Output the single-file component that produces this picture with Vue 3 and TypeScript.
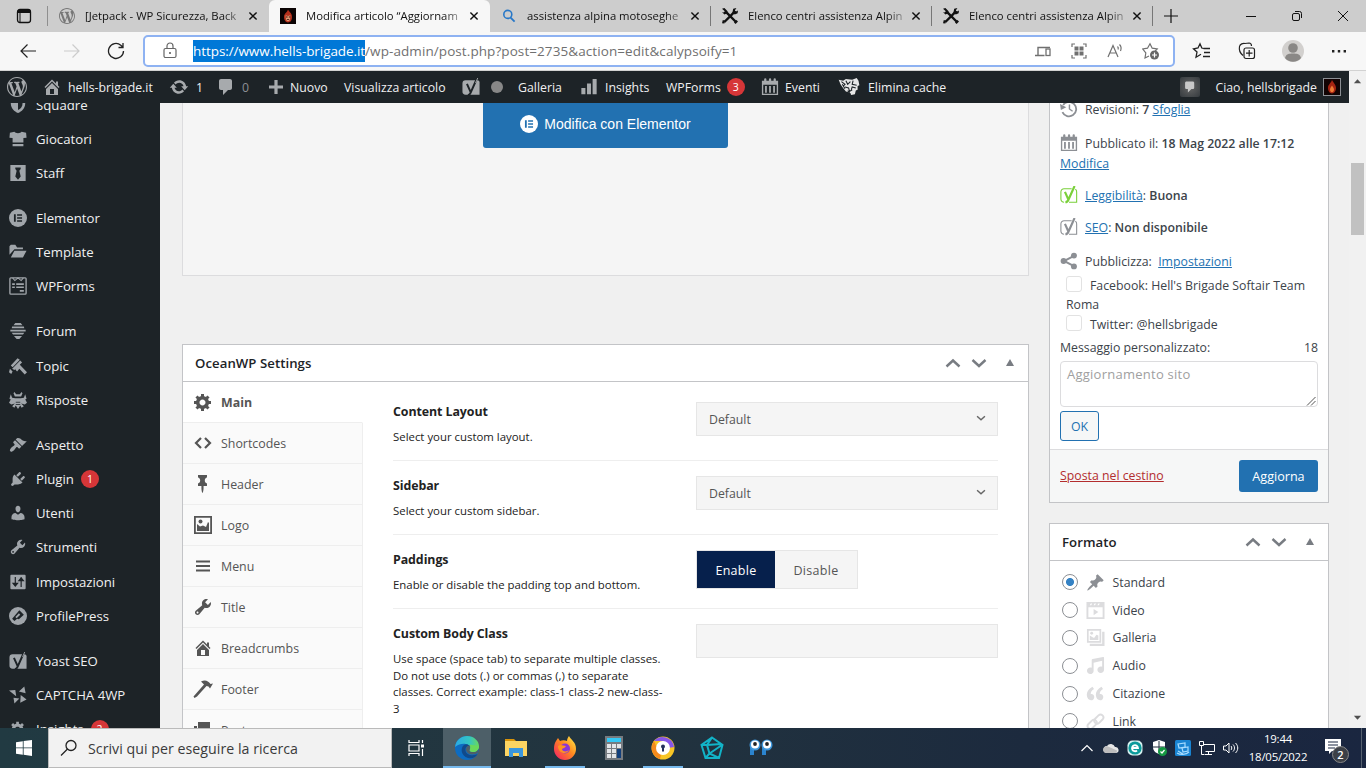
<script setup lang="ts">
interface MenuItem {
  label: string
  icon: string
  badge?: string
  gap?: boolean
}

interface BrowserTab {
  title: string
  icon: string
  active?: boolean
  divider?: boolean
}

const icons: Record<string, string> = {
  wordpress:
    '<path d="M20 10c0-5.51-4.49-10-10-10C4.48 0 0 4.49 0 10c0 5.52 4.48 10 10 10 5.51 0 10-4.48 10-10zM7.78 15.37L4.37 6.22c.55-.02 1.17-.08 1.17-.08.5-.06.44-1.13-.06-1.11 0 0-1.45.11-2.37.11-.18 0-.37 0-.58-.01C4.12 2.69 6.87 1.11 10 1.11c2.33 0 4.45.87 6.05 2.34-.68-.11-1.65.39-1.65 1.58 0 .74.45 1.36.9 2.1.35.61.55 1.36.55 2.46 0 1.49-1.4 5-1.4 5l-3.03-8.37c.54-.02.82-.17.82-.17.5-.05.44-1.25-.06-1.22 0 0-1.44.12-2.38.12-.87 0-2.33-.12-2.33-.12-.5-.03-.56 1.2-.06 1.22l.92.08 1.26 3.41zM17.41 10c.24-.64.74-1.87.43-4.25.7 1.29 1.05 2.71 1.05 4.25 0 3.29-1.73 6.24-4.4 7.78.97-2.59 1.94-5.2 2.92-7.78zM6.1 18.09C3.12 16.65 1.11 13.53 1.11 10c0-1.3.23-2.48.72-3.59C3.25 10.3 4.67 14.2 6.1 18.09zm4.03-6.63l2.58 6.98c-.86.29-1.76.45-2.71.45-.79 0-1.57-.11-2.29-.33.81-2.38 1.62-4.74 2.42-7.1z"/>',
  home: '<path fill-rule="evenodd" d="M16 8.5l1.53 1.53-1.06 1.06L10 4.6l-6.47 6.49-1.06-1.06L10 2.5l4 4v-2h2v4zm-6-2.46l6 5.99V18H4v-5.97zM12 17v-5H8v5h4z"/>',
  update:
    '<path d="M10.2 3.28c3.53 0 6.43 2.61 6.92 6h2.08l-3.5 4-3.5-4h2.32c-.45-1.97-2.21-3.45-4.32-3.45-1.45 0-2.73.71-3.54 1.78L4.95 5.66C6.23 4.2 8.11 3.28 10.2 3.28zm-.4 13.44c-3.52 0-6.43-2.61-6.92-6H.8l3.5-4c1.17 1.33 2.33 2.67 3.5 4H5.48c.45 1.97 2.21 3.45 4.32 3.45 1.45 0 2.73-.71 3.54-1.78l1.71 1.95c-1.28 1.46-3.15 2.38-5.25 2.38z"/>',
  comment: '<path d="M5 2h9c1.1 0 2 .9 2 2v7c0 1.1-.9 2-2 2h-2l-5 5v-5H5c-1.1 0-2-.9-2-2V4c0-1.1.9-2 2-2z"/>',
  plus: '<path d="M8.4 3h3.2v5.4H17v3.2h-5.4V17H8.4v-5.4H3V8.400h5.400z"/>',
  chart: '<path d="M18.500 18V1h-4.500v17zM12.200 18V6H7.800v12zM6 18v-7H1.500v7z"/>',
  calendar:
    '<path fill-rule="evenodd" d="M1 3h2.500V1.500a1.200 1.200 0 0 1 2.500 0V3h2.800V1.500a1.200 1.200 0 0 1 2.500 0V3H14V1.500a1.200 1.200 0 0 1 2.500 0V3H19v16H1zM2.500 7.500v10h15v-10zM4.500 9h2v7.500h-2zM9 9h2v7.500H9zM13.500 9h2v7.500h-2z"/>',
  yoast:
    '<path d="M4 2.500h13a2.500 2.500 0 0 1 2.500 3v13H4a3.500 3.500 0 0 1-3.500-3.500V6A3.500 3.500 0 0 1 4 2.500z"/><path d="M5.500 6.500l4 9M16.800 0L9.500 16.500C8.800 18.200 8 19 6.500 19" fill="none" stroke="#1d2327" stroke-width="2.200"/><path d="M17.500 0l-2.500 5.500" stroke="currentColor" stroke-width="1"/>',
  yoastline:
    '<path d="M13 3H4.500A3.500 3.500 0 0 0 1 6.500v8A3.500 3.500 0 0 0 4.500 18M10 18h8.500V6.500a3 3 0 0 0-1.500-2.800" fill="none" stroke="currentColor" stroke-width="1.200"/><path d="M5.500 6.500l3.800 8.500M16.200 0L9.500 15c-.8 2-1.500 3-3.500 3" fill="none" stroke="currentColor" stroke-width="2.400"/>',
  tiger:
    '<path d="M0 2l5 1 3-2 7 1 5-2 2 3 1 5-2 1v4l-2 1-1 4-4 1-2-3-4-1-4-5-2-3z"/><path d="M3 4l4 3-2 2M8 3l2 4 3-3M16 3l-1 4 5 1M7 10l4 1 1 4 3-2M4 7l3 5M19 11l-4-1-1 3M10 14l3 4" fill="none" stroke="#1d2327" stroke-width="1.200"/>',
  shield: '<path d="M2 4l8-3 8 3v4c0 6-4 9-8 11-4-2-8-5-8-11z"/><path d="M10 4l5 1.500v3c0 3-2 5.500-5 7z" fill="#1d2327"/>',
  shirt: '<path d="M6 2c1 2 7 2 8 0l5 1 .5 5.500L16 9v5H4V9L.5 8.500 1 3zM4 15.500h12V18H4z"/>',
  tie: '<path fill-rule="evenodd" d="M1.500 1h17v18h-17zM7 4h6v1.500l-1.500 2L13 14l-3 3.500L7 14l1.500-6.500L7 5.500z"/>',
  elementor:
    '<circle cx="10" cy="10" r="10"/><path d="M5.500 5.800h2v8.400h-2zM9 5.800h5.500v1.800H9zM9 9.100h5.500v1.800H9zM9 12.400h5.500v1.800H9z" fill="var(--hole,#1d2327)"/>',
  folder: '<path d="M.5 13V3.500L2 2h5l2 3h6.500v2H6zM2 16L6 8.500h13.500L15.500 16z"/>',
  wpforms:
    '<rect x="1" y="1" width="18" height="18" rx="1" fill="none" stroke="currentColor" stroke-width="1.500"/><path d="M4 1l2.500 3L10 1l3.500 3L16 1" fill="none" stroke="currentColor" stroke-width="1.200"/><path d="M3.500 7h3v1.800h-3zM8 7h8.500v1.800H8zM3.500 10.500h3v1.800h-3zM8 10.500h8.500v1.800H8zM12 14.500h4.500v1.800H12z"/>',
  hive: '<path d="M7 1h6l2 2.500H5zM3.500 5h13l.5 2H3zM1.500 8.500h17v2h-17zM3 12h14l-1.500 2h-11zM5.500 15.500h9L11.500 19h-3z"/>',
  topic:
    '<path d="M2 9.500L9.500 1.500 12 3 4 11.500zM3.500 13L12.500 4l2 2L6 14.500zM1 13l3 3-1.500 3L0 17zM9 10.500l2.500-2.500L20 17l-2.500 2.500L11.500 13 9 16l-2-2z"/>',
  bee: '<path d="M6 1l2 2.500h4L14 1l1 1.500L13.500 6h-7L5 2.500zM2 3.500l1.500 4L7 8l6 0 3.500-.5L18 3.500l1.500 5-1.500 1 2 3.500-2.500 2-4-1L16.500 17 14 18.500 12.500 16 10 20l-2.500-4L6 18.500 3.500 17l3-3-4 1L0 13l2-3.500-1.500-1z"/><path d="M7.500 12.500h5M7.500 15h5" stroke="#1d2327" stroke-width=".9"/>',
  brush:
    '<path d="M14.480 11.060L7.410 3.990l1.500-1.500c.5-.56 2.300-.47 3.510.32 1.210.8 1.430 1.280 2.910 2.100 1.180.64 2.450 1.260 4.450.85zm-.71.71L6.700 4.700 4.930 6.470c-.39.39-.39 1.020 0 1.410l1.060 1.060c.39.39.39 1.030 0 1.420-.6.6-1.430 1.110-2.210 1.690-.35.26-.7.53-1.010.84C1.430 14.230.4 16.080 1.400 17.070c.99 1 2.840-.03 4.180-1.360.31-.31.58-.66.85-1.020.57-.78 1.080-1.610 1.690-2.210.39-.39 1.020-.39 1.410 0l1.060 1.060c.39.39 1.020.39 1.410 0z"/>',
  plug: '<path d="M13.110 4.360L9.870 7.600 8 5.730l3.240-3.240c.35-.34 1.050-.2 1.560.32.52.51.66 1.210.31 1.550zm-8 1.770l.91-1.120 9.010 9.010-1.190.84c-.71.71-2.630 1.160-3.820 1.160H6.140L4.900 17.260c-.59.59-1.540.59-2.120 0-.59-.58-.59-1.530 0-2.120l1.240-1.240v-3.880c0-1.130.4-3.190 1.090-3.890zm7.260 3.970l3.240-3.240c.34-.35 1.040-.21 1.550.31.52.51.66 1.210.31 1.550l-3.240 3.250z"/>',
  user: '<path d="M10 9.250c-2.270 0-2.730-3.440-2.730-3.440C7 4.020 7.820 2 9.970 2c2.160 0 2.980 2.020 2.710 3.810 0 0-.41 3.440-2.680 3.440zm0 2.570L12.720 10c2.390 0 4.520 2.330 4.520 4.530v2.490s-3.650 1.130-7.240 1.130c-3.650 0-7.240-1.130-7.240-1.130v-2.490c0-2.250 1.940-4.480 4.470-4.480z"/>',
  wrench:
    '<path d="M16.680 9.770c-1.340 1.340-3.300 1.670-4.950.99l-5.410 6.520c-.99.99-2.590.99-3.580 0s-.99-2.590 0-3.570l6.520-5.420c-.68-1.650-.35-3.610.99-4.950 1.280-1.280 3.120-1.620 4.720-1.060l-2.890 2.890 2.820 2.820 2.860-2.870c.53 1.580.18 3.390-1.080 4.650zM3.810 16.210c.4.39 1.040.39 1.430 0 .4-.4.4-1.040 0-1.430-.39-.4-1.030-.4-1.430 0-.39.39-.39 1.030 0 1.430z"/>',
  sliders:
    '<path d="M18.500 17V3c0-.55-.45-1-1-1h-15c-.55 0-1 .45-1 1v14c0 .55.45 1 1 1h15c.55 0 1-.45 1-1z"/><path d="M7 4.500v11M4.500 11.500h5L7 14.500zM13.500 4.500v11M11 8.500h5L13.500 5.500z" fill="#1d2327" stroke="#1d2327" stroke-width="1.300"/>',
  profilepress:
    '<circle cx="10" cy="10" r="10"/><path fill-rule="evenodd" d="M11.500 3.500l5 5-5.500 5-2-.5-3 2.500L3.500 13zM11 7l-4 4 1.500 1.500L12.500 8.500z" fill="#1d2327"/>',
  captcha: '<path d="M0 5l7-.5 1 7zM11 6l6-5.500L18.500 8zM13 10l6.500 5-7 3.500zM5 13l6.500 1L6 19.500z"/>',
  gear: '<path d="M18 12h-2.180c-.17.7-.44 1.350-.81 1.930l1.540 1.540-2.100 2.100-1.540-1.540c-.58.36-1.230.63-1.910.79V19H8v-2.180c-.68-.16-1.330-.43-1.910-.79l-1.540 1.540-2.120-2.120 1.540-1.540c-.36-.58-.63-1.230-.79-1.910H1V9.030h2.170c.16-.7.44-1.350.8-1.940L2.430 5.550l2.100-2.100 1.540 1.540c.58-.37 1.240-.64 1.930-.81V2h3v2.180c.68.16 1.330.43 1.910.79l1.540-1.540 2.120 2.120-1.540 1.540c.36.59.64 1.240.8 1.940H18V12zm-8.500 1.500c1.660 0 3-1.340 3-3s-1.340-3-3-3-3 1.340-3 3 1.340 3 3 3z"/>',
  code: '<path d="M8 5l-5 5 5 5M12 5l5 5-5 5" fill="none" stroke="currentColor" stroke-width="2.200"/>',
  sticky:
    '<path d="M5 3.610V1.040l8.990-.01-.01 2.580c-1.220.26-2.160 1.350-2.160 2.670v.5c.01 1.310.93 2.400 2.170 2.660l-.01 2.580h-3.410l-.01 2.570c0 .6-.47 4.410-1.060 4.410-.6 0-1.080-3.810-1.080-4.410v-2.560L5 12.020l.01-2.580c1.230-.25 2.150-1.350 2.150-2.660v-.5c0-1.310-.92-2.410-2.160-2.670z"/>',
  image:
    '<path fill-rule="evenodd" d="M1 1h18v18H1zM2.800 2.800v14.400h14.400V2.800zM4 16V9l3 2.500 3-1 3 1.500 2-5 1 1V16z"/><circle cx="7.500" cy="6.500" r="2"/>',
  lines: '<path d="M3 4.500h14v2H3zM3 9h14v2H3zM3 13.500h14v2H3z"/>',
  hammer: '<path d="M8 2.500c4-2 7-1 9.500 2.500l2.500-.5-3 5-1.500-2-2-.5L4 17.500 1.500 19 .5 17.500 11 5.500z"/>',
  stack: '<path d="M5 2h12v12H5zM1 6h3v9h12v3H1z"/>',
  pin: '<path d="M10.440 3.020l1.820-1.820 6.360 6.350-1.830 1.820c-1.050-.68-2.480-.57-3.410.36l-.75.75c-.92.93-1.040 2.350-.35 3.410l-1.830 1.820-2.410-2.410-2.800 2.790c-.42.42-3.380 2.710-3.800 2.290s1.860-3.390 2.280-3.810l2.790-2.790L4.100 9.360l1.830-1.820c1.050.69 2.480.57 3.400-.36l.75-.75c.93-.92 1.050-2.350.36-3.410z"/>',
  video:
    '<path fill-rule="evenodd" d="M.5 1h19v18H.5zM2.500 6.500v10.500h15V6.500zM8 8.500l5 3.200L8 15zM4 4.500h1.500l1-2H5zM8 4.500h1.500l1-2H9zM12 4.500h1.500l1-2H13z"/>',
  gallery:
    '<path fill-rule="evenodd" d="M1 1h15v14.500H1zM2.800 2.800v10.900h11.400V2.800zM4 12.500V8l2.500 1.500 2 1L11 7l2 1v4.500zM17 4h2.500v15H4v-2.500h13z"/><circle cx="6" cy="5.500" r="1.500"/>',
  audio:
    '<path d="M6.990 3.080l11.020-2c.55-.08.99.45.99 1V14.500c0 1.940-1.570 3.500-3.500 3.500S12 16.440 12 14.500c0-1.930 1.570-3.500 3.500-3.500.54 0 1.040.14 1.500.35V5.080l-9 2V16c-.24 1.700-1.740 3-3.500 3C2.570 19 1 17.440 1 15.500 1 13.570 2.570 12 4.500 12c.54 0 1.040.14 1.500.35V4.080c0-.55.44-.91.99-1z"/>',
  quote:
    '<path d="M9.490 13.220c0-.74-.2-1.380-.61-1.900-.62-.78-1.830-.88-2.530-.72-.29-1.650 1.110-3.750 2.920-4.650L7.880 4c-2.730 1.300-5.420 4.280-4.960 8.050C3.210 14.430 4.590 16 6.540 16c.85 0 1.560-.25 2.120-.75s.83-1.180.83-2.030zm8.050 0c0-.74-.2-1.380-.61-1.900-.63-.78-1.830-.88-2.530-.72-.29-1.650 1.110-3.750 2.920-4.650L15.930 4c-2.730 1.300-5.410 4.280-4.950 8.050.29 2.380 1.660 3.950 3.610 3.950.85 0 1.560-.25 2.120-.75s.83-1.180.83-2.030z" transform="translate(-2.500 -1.800) scale(1.180)"/>',
  link: '<g fill="none" stroke="currentColor" stroke-width="2"><rect x="8" y="4.500" width="11" height="6" rx="3" transform="rotate(-45 13.500 7.500)"/><rect x="1" y="10" width="11" height="6" rx="3" transform="rotate(-45 6.500 13)"/></g>',
  history:
    '<path d="M3.500 5.500a8 8 0 1 1-.8 8" fill="none" stroke="currentColor" stroke-width="2"/><path d="M0 4.500l1 6.500 6-3z"/><path d="M10.500 5v5l3.500 2.500" fill="none" stroke="currentColor" stroke-width="1.600"/>',
  share: '<path d="M15 4.500L4.500 10 15 15.500" fill="none" stroke="currentColor" stroke-width="2.200"/><circle cx="15.500" cy="4" r="3.300"/><circle cx="4" cy="10" r="3.300"/><circle cx="15.500" cy="16" r="3.300"/>',
  up: '<path d="M3.500 13.500L10 7.500l6.500 6" fill="none" stroke="currentColor" stroke-width="2.400"/>',
  down: '<path d="M3.500 7l6.500 6 6.500-6" fill="none" stroke="currentColor" stroke-width="2.400"/>',
  tri: '<path d="M10 6l4 7H6z"/>',
  close: '<path d="M5.500 5.500l9 9M14.500 5.500l-9 9" fill="none" stroke="currentColor" stroke-width="1.800"/>',
  flame: '<path d="M0 0h20v20H0z" fill="#0b0404"/><path d="M10 2c1 3 5 4 5 9s-2 7-5 7-5-3-5-7 4-5 5-9z" fill="#b5301c"/><path d="M7 9l3 1 3-1-.5 6-2.500 2-2.500-2z" fill="#e39a72"/><path d="M7.500 10.500h2v1.500h-2zM11 10.500h2v1.500h-2zM8.500 14h3v1h-3z" fill="#3a0d08"/>',
  flamebig: '<path d="M0 0h20v20H0z" fill="#120303"/><path d="M10 1c1 3 5 6 5 10s-2 7-5 7-5-3-5-7 4-6 5-10z" fill="#a52412"/><path d="M10 8c1 2 2.500 3 2.500 5s-1 3.500-2.500 3.500S7.500 15 7.500 13s1.500-3 2.500-5z" fill="#ee7b35"/>',
  search: '<circle cx="8.500" cy="8" r="5" fill="none" stroke="#2878c8" stroke-width="2"/><path d="M12 12l5 5" stroke="#2878c8" stroke-width="2.400"/>',
  tools: '<path d="M3 17.500L16.500 4M5.500 5.500l12 12" stroke="#111" stroke-width="3"/><path d="M0 1l3-1 4 4-1 3-3 1-3-3 2 .5L3.500 4zM14 1l4-1-2 3 1.500 1.500L20 3l-.5 3.500L16 8l-3-2zM1 15l3 1-1 3.500L0 19zM15 18l3-3 2 2-3 3z" fill="#111"/>',
}

const tabs: BrowserTab[] = [
  { title: '[Jetpack - WP Sicurezza, Back', icon: 'wordpress' },
  { title: 'Modifica articolo “Aggiornam', icon: 'flame', active: true },
  { title: 'assistenza alpina motoseghe', icon: 'search', divider: true },
  { title: 'Elenco centri assistenza Alpin', icon: 'tools', divider: true },
  { title: 'Elenco centri assistenza Alpin', icon: 'tools', divider: true },
]

const menu: MenuItem[] = [
  { label: 'Squadre', icon: 'shield' },
  { label: 'Giocatori', icon: 'shirt' },
  { label: 'Staff', icon: 'tie' },
  { label: 'Elementor', icon: 'elementor', gap: true },
  { label: 'Template', icon: 'folder' },
  { label: 'WPForms', icon: 'wpforms' },
  { label: 'Forum', icon: 'hive', gap: true },
  { label: 'Topic', icon: 'topic' },
  { label: 'Risposte', icon: 'bee' },
  { label: 'Aspetto', icon: 'brush', gap: true },
  { label: 'Plugin', icon: 'plug', badge: '1' },
  { label: 'Utenti', icon: 'user' },
  { label: 'Strumenti', icon: 'wrench' },
  { label: 'Impostazioni', icon: 'sliders' },
  { label: 'ProfilePress', icon: 'profilepress' },
  { label: 'Yoast SEO', icon: 'yoast', gap: true },
  { label: 'CAPTCHA 4WP', icon: 'captcha' },
  { label: 'Insights', icon: 'gear', badge: '2' },
]

const oceanTabs: MenuItem[] = [
  { label: 'Main', icon: 'gear' },
  { label: 'Shortcodes', icon: 'code' },
  { label: 'Header', icon: 'sticky' },
  { label: 'Logo', icon: 'image' },
  { label: 'Menu', icon: 'lines' },
  { label: 'Title', icon: 'wrench' },
  { label: 'Breadcrumbs', icon: 'home' },
  { label: 'Footer', icon: 'hammer' },
  { label: 'Posts', icon: 'stack' },
]

const formats: MenuItem[] = [
  { label: 'Standard', icon: 'pin' },
  { label: 'Video', icon: 'video' },
  { label: 'Galleria', icon: 'gallery' },
  { label: 'Audio', icon: 'audio' },
  { label: 'Citazione', icon: 'quote' },
  { label: 'Link', icon: 'link' },
]
</script>

<template>
  <div class="screen">
    <header class="tabstrip">
      <div class="tab-menu">
        <svg viewBox="0 0 16 16" class="i16"><rect x="1.500" y="1.500" width="13" height="13" rx="2.500" fill="none" stroke="#111" stroke-width="1.300" /><path d="M1.500 3a1.500 1.500 0 0 1 1.500-1.500h10A1.500 1.500 0 0 1 14.500 3v2h-13z" fill="#111" /><path d="M4 5v9" stroke="#111" /></svg>
      </div>
      <div v-for="(t, i) in tabs" :key="i" class="tab" :class="{ active: t.active, divider: t.divider }">
        <svg class="i16 fav" viewBox="0 0 20 20" fill="currentColor" v-html="icons[t.icon]" />
        <span class="tab-title">{{ t.title }}</span>
        <svg class="i16 x" viewBox="0 0 20 20" v-html="icons.close" />
      </div>
      <svg class="i18 newtab" viewBox="0 0 18 18"><path d="M9 2v14M2 9h14" stroke="#111" stroke-width="1.200" /></svg>
      <div class="wincontrols">
        <svg viewBox="0 0 12 12" class="i12"><path d="M1 6.500h10" stroke="#111" /></svg>
        <svg viewBox="0 0 12 12" class="i12"><rect x="1.500" y="3.500" width="7" height="7" rx="1.500" fill="none" stroke="#111" /><path d="M4 1.500h4.500a2 2 0 0 1 2 2V8" fill="none" stroke="#111" /></svg>
        <svg viewBox="0 0 12 12" class="i12"><path d="M1 1l10 10M11 1L1 11" stroke="#111" /></svg>
      </div>
    </header>

    <nav class="toolbar">
      <div class="navbtns">
        <svg viewBox="0 0 18 18" class="i18"><path d="M17 9H2M8.500 2.500L2 9l6.500 6.500" fill="none" stroke="#222" stroke-width="1.200" /></svg>
        <svg viewBox="0 0 18 18" class="i18"><path d="M1 9h15M9.500 2.500L16 9l-6.500 6.500" fill="none" stroke="#ccc" stroke-width="1.200" /></svg>
        <svg viewBox="0 0 18 18" class="i18"><path d="M16.500 9A7.500 7.500 0 1 1 13.800 3.200L16 5.200M16 1v4.500h-4.500" fill="none" stroke="#222" stroke-width="1.300" /></svg>
      </div>
      <div class="address">
        <svg viewBox="0 0 16 18" class="lock"><rect x="2" y="6.500" width="12" height="9" rx="1.500" fill="none" stroke="#666" stroke-width="1.200" /><path d="M5 6.500V4a3 3 0 0 1 6 0v2.500" fill="none" stroke="#666" stroke-width="1.200" /><circle cx="8" cy="11" r="1" fill="#555" /></svg>
        <span class="url"><mark>https://www.hells-brigade.it</mark>/wp-admin/post.php?post=2735&amp;action=edit&amp;calypsoify=1</span>
        <svg viewBox="0 0 18 18" class="i18 a1"><path d="M4 13V5.500h12M1 13.500h9.500" fill="none" stroke="#707070" stroke-width="1.400" /><rect x="12" y="7" width="4" height="6.500" fill="none" stroke="#707070" stroke-width="1.300" /></svg>
        <svg viewBox="0 0 18 18" class="i18 a2"><path d="M2 5V2h3M13 2h3v3M16 13v3h-3M5 16H2v-3" fill="none" stroke="#707070" stroke-width="1.200" /><path d="M4.500 4.500h4v4h-4zM9.500 4.500h4v4h-4zM4.500 9.500h4v4h-4zM9.500 9.500h4v4h-4z" fill="#707070" /></svg>
        <svg viewBox="0 0 18 18" class="i18 a3"><path d="M2 15L7 3.500 12 15M4 11h6.500M11.500 4.500c1 1 1 2 .5 3M13.500 2.500c2 2 2 4 1 6.500" fill="none" stroke="#707070" stroke-width="1.200" /></svg>
        <svg viewBox="0 0 18 18" class="i18 a4"><path d="M7 14l-4 2 .8-5L.8 7l4.700-.8L8 1.800l2.200 4.400 5 .8-2 2" fill="none" stroke="#707070" stroke-width="1.200" /><circle cx="12.500" cy="13" r="4.500" fill="#666" /><path d="M12.500 10.500v5M10 13h5" stroke="#fff" stroke-width="1.200" /></svg>
      </div>
      <div class="toolicons">
        <svg viewBox="0 0 20 20" class="i20"><path d="M11.500 7.500L9.800 7 8 2.800 6 7l-4.500.8L5 11l-1 5.200 5-3M11.500 7.500H18M12 11.500h6M11 15.500h7" fill="none" stroke="#222" stroke-width="1.300" /></svg>
        <svg viewBox="0 0 20 20" class="i20"><rect x="7" y="7" width="10.500" height="10.500" rx="2" fill="none" stroke="#222" stroke-width="1.200" /><path d="M12.200 9v6.500M9 12.200h6.500M6 14.500C3 12 2 8 2.500 5.500S6 2 8 2.500l4-.5c1.500 0 2.500 1 2.500 3" fill="none" stroke="#222" stroke-width="1.200" /></svg>
        <svg viewBox="0 0 22 22" class="i22"><circle cx="11" cy="11" r="11" fill="#d2d0ce" /><circle cx="11" cy="8" r="4.800" fill="#8a8886" /><path d="M3 18c1-4 4-4.500 8-4.500s7 .5 8 4.500c-4 5-12 5-16 0z" fill="#8a8886" /></svg>
        <svg viewBox="0 0 20 20" class="i20"><path d="M3 9h2.400v2.400H3zM8.800 9h2.400v2.400H8.800zM14.600 9H17v2.400h-2.400z" fill="#222" /></svg>
      </div>
    </nav>

    <div class="viewport">
      <div class="page">
        <div class="adminbar">
          <div><svg class="i20 wp" viewBox="0 0 20 20" v-html="icons.wordpress" /></div>
          <div><svg class="i20 pull" viewBox="0 0 20 20" v-html="icons.home" /><span class="t1">hells-brigade.it</span></div>
          <div><svg class="i20 nudge" viewBox="0 0 20 20" v-html="icons.update" /><span class="t2">1</span></div>
          <div><svg class="i20 pull" viewBox="0 0 20 20" v-html="icons.comment" /><span class="t1 dim">0</span></div>
          <div><svg class="i20 pull" viewBox="0 0 20 20" v-html="icons.plus" /><span class="t3">Nuovo</span></div>
          <div>Visualizza articolo</div>
          <div><svg class="i18" viewBox="0 0 20 20" v-html="icons.yoast" /><i class="dot" /></div>
          <div>Galleria</div>
          <div><svg class="i18" viewBox="0 0 20 20" v-html="icons.chart" /><span class="t2">Insights</span></div>
          <div>WPForms<b class="badge bar-badge">3</b></div>
          <div><svg class="i18" viewBox="0 0 20 20" v-html="icons.calendar" /><span class="t4">Eventi</span></div>
          <div><svg class="tiger" viewBox="0 0 24 20" v-html="icons.tiger" /><span class="t2">Elimina cache</span></div>
          <div class="bar-right">
            <span class="notes"><svg viewBox="0 0 20 20" v-html="icons.comment" /></span>
            <span>Ciao, hellsbrigade</span>
            <svg class="avatar" viewBox="0 0 20 20" v-html="icons.flamebig" />
          </div>
        </div>

        <div class="content">
          <aside class="sidemenu">
            <div v-for="m in menu" :key="m.label" class="side-item" :class="{ gap: m.gap }">
              <svg class="i18" viewBox="0 0 20 20" v-html="icons[m.icon]" />
              <span>{{ m.label }}</span>
              <b v-if="m.badge" class="badge">{{ m.badge }}</b>
            </div>
          </aside>

          <main class="main">
            <section class="editor">
              <button class="elementor-btn"><svg class="i18" viewBox="0 0 20 20" v-html="icons.elementor" />Modifica con Elementor</button>
            </section>

            <section class="box ocean">
              <h2 class="box-head">
                <span>OceanWP Settings</span>
                <svg class="i20" viewBox="0 0 20 20" v-html="icons.up" />
                <svg class="i20" viewBox="0 0 20 20" v-html="icons.down" />
                <svg class="i20 tri" viewBox="0 0 20 20" v-html="icons.tri" />
              </h2>
              <div class="ocean-body">
                <ul class="ocean-tabs">
                  <li v-for="(t, i) in oceanTabs" :key="t.label" :class="{ current: i === 0 }">
                    <svg class="i20" viewBox="0 0 20 20" v-html="icons[t.icon]" />{{ t.label }}
                  </li>
                </ul>
                <div class="fields">
                  <div class="field">
                    <div class="desc"><h4>Content Layout</h4><p>Select your custom layout.</p></div>
                    <div class="select">Default<svg viewBox="0 0 20 20" v-html="icons.down" /></div>
                  </div>
                  <div class="field">
                    <div class="desc"><h4>Sidebar</h4><p>Select your custom sidebar.</p></div>
                    <div class="select">Default<svg viewBox="0 0 20 20" v-html="icons.down" /></div>
                  </div>
                  <div class="field">
                    <div class="desc"><h4>Paddings</h4><p>Enable or disable the padding top and bottom.</p></div>
                    <div class="toggle"><span class="on">Enable</span><span>Disable</span></div>
                  </div>
                  <div class="field last">
                    <div class="desc">
                      <h4>Custom Body Class</h4>
                      <p>Use space (space tab) to separate multiple classes.<br>Do not use dots (.) or commas (,) to separate<br>classes. Correct example: class-1 class-2 new-class-<br>3</p>
                    </div>
                    <div class="select" />
                  </div>
                </div>
              </div>
            </section>
          </main>

          <aside class="rightcol">
            <section class="box publish">
              <div class="pub-body">
                <p class="r1"><svg class="i18" viewBox="0 0 20 20" v-html="icons.history" /><span>Revisioni: <b>7</b> <a>Sfoglia</a></span></p>
                <p class="r2"><svg class="i18" viewBox="0 0 20 20" v-html="icons.calendar" /><span>Pubblicato il: <b>18 Mag 2022 alle 17:12</b></span></p>
                <p class="r3"><a>Modifica</a></p>
                <p class="r4"><svg class="i18 green" viewBox="0 0 20 20" v-html="icons.yoastline" /><span><a>Leggibilità</a>: <b>Buona</b></span></p>
                <p class="r5"><svg class="i18" viewBox="0 0 20 20" v-html="icons.yoastline" /><span><a>SEO</a>: <b>Non disponibile</b></span></p>
                <p class="r6"><svg class="i18" viewBox="0 0 20 20" v-html="icons.share" /><span>Pubblicizza: &nbsp;<a>Impostazioni</a></span></p>
                <p class="r7"><i class="check" />Facebook: Hell's Brigade Softair Team</p>
                <p class="r8">Roma</p>
                <p class="r9"><i class="check" />Twitter: @hellsbrigade</p>
                <p class="r10"><span>Messaggio personalizzato:</span><span>18</span></p>
                <div class="message">Aggiornamento sito<svg viewBox="0 0 10 10"><path d="M1 9.500L9.500 1M5 9.500L9.500 5" stroke="#555" stroke-width="1" /></svg></div>
                <button class="ok">OK</button>
              </div>
              <div class="pub-foot"><a>Sposta nel cestino</a><button>Aggiorna</button></div>
            </section>

            <section class="box format">
              <h2 class="box-head">
                <span>Formato</span>
                <svg class="i20" viewBox="0 0 20 20" v-html="icons.up" />
                <svg class="i20" viewBox="0 0 20 20" v-html="icons.down" />
                <svg class="i20 tri" viewBox="0 0 20 20" v-html="icons.tri" />
              </h2>
              <ul>
                <li v-for="(f, i) in formats" :key="f.label" :class="{ picked: i === 0 }">
                  <i class="radio" /><svg class="i19" viewBox="0 0 20 20" v-html="icons[f.icon]" />{{ f.label }}
                </li>
              </ul>
            </section>
          </aside>
        </div>
      </div>
      <div class="scrollbar">
        <svg viewBox="0 0 10 6"><path d="M1 5.500l4-4.500 4 4.500z" fill="#505050" /></svg>
        <div class="thumb" />
        <svg viewBox="0 0 10 6" class="bottom"><path d="M1 .5L5 5 9 .5z" fill="#505050" /></svg>
      </div>
    </div>

    <footer class="taskbar">
      <div class="start"><svg viewBox="0 0 16 16" class="i16"><path d="M0 2.200l6.800-1v6.300H0zM7.600 1.100L16 0v7.500H7.600zM0 8.300h6.800v6.400L0 13.800zM7.600 8.300H16V16l-8.400-1.200z" fill="#fff" /></svg></div>
      <div class="searchbox"><svg viewBox="0 0 18 18" class="i18"><circle cx="11" cy="6.500" r="5" fill="none" stroke="#222" stroke-width="1.300" /><path d="M7.500 10L1 16.500" stroke="#222" stroke-width="1.300" /></svg>Scrivi qui per eseguire la ricerca</div>
      <div class="app taskview"><svg viewBox="0 0 18 18" width="18" height="18"><path d="M2 1v2.500h10V1M2 17v-2.500h10V17M2 6h10v6H2zM15.500 1v3M15.500 10v7" fill="none" stroke="#fff" stroke-width="1.200" /><path d="M14 5.500h3v3h-3z" fill="#fff" /></svg></div>
      <div class="app edge">
        <svg viewBox="0 0 24 24" width="24" height="24">
          <defs><linearGradient id="eg" x1="0" x2="1"><stop offset="0" stop-color="#2aa9e6" /><stop offset=".6" stop-color="#34c5c3" /><stop offset="1" stop-color="#6ad95a" /></linearGradient></defs>
          <circle cx="12" cy="12" r="12" fill="#0d6cc2" />
          <path d="M0 11C1 4 6 0 12 0c7 0 12 5 12 10 0 4-3 6-6 6-3 0-4-1-3-3 1-5-8-8-15-2z" fill="url(#eg)" />
          <path d="M9 9c-4 3-3 11 4 13 5 1 8-1 9.500-4-3 2-12 2-12-4 0-2 .5-4 4-4-1-2-4-2-5.500-1z" fill="#114a8b" />
          <path d="M15 9.500c-3 0-4 2-4 4s2 5 6 5c3 0 5-1 6-2l1-6v-.5c0 4-3 6-6 6-3 0-4-1-3-3 .5-1 .5-2.500 0-3.500z" fill="#4d5f68" />
          <path d="M24 10c0 4-3 6-6 6-3 0-4-1-3-3 .5-1 .5-3-.5-4.500z" fill="#6ad95a" />
        </svg>
      </div>
      <div class="app"><svg viewBox="0 0 22 20" width="22" height="20"><path d="M0 1h9l2 2h-11z" fill="#d9940a" /><path d="M0 3h22v15H0z" fill="#fcd462" /><path d="M4 19v-9h14v9h-4v-4H8v4z" fill="#3a96dd" /></svg></div>
      <div class="app running">
        <svg viewBox="0 0 24 24" width="24" height="24">
          <defs><linearGradient id="ff" x1="1" y1="0" x2="0" y2="1"><stop offset="0" stop-color="#fff24a" /><stop offset=".45" stop-color="#ff8a1f" /><stop offset="1" stop-color="#f5156c" /></linearGradient></defs>
          <path d="M3 5l2-3 2 3c2-1 5-1 7 0 0-2 1-4 2-5 2 4 7 6 7 13a11 11 0 0 1-22 0c0-3 .5-6 2-8z" fill="url(#ff)" /><circle cx="12" cy="12.500" r="5" fill="#8a35d8" /><path d="M5 10c3-2 5 0 8 0-1 2-3 2-4 3 0 3 5 3 7 1-2 5-11 4-11-4z" fill="#ff9321" />
        </svg>
      </div>
      <div class="app"><svg viewBox="0 0 18 24" width="18" height="24"><path d="M0 0h18v24H0z" fill="#767b80" /><path d="M2 2h14v4H2z" fill="#35c8f5" /><path d="M2 8h4v4H2zM7 8h4v4H7zM12 8h4v4h-4zM2 13h4v4H2zM7 13h4v4H7zM2 18h4v4H2zM7 18h4v4H7z" fill="#e3e5e8" /><path d="M12 13h4v9h-4z" fill="#123f7b" /></svg></div>
      <div class="app running"><svg viewBox="0 0 24 24" width="24" height="24"><circle cx="12" cy="12" r="11.500" fill="#f7c526" /><path d="M3 5a11.500 11.500 0 0 1 20 6l-6 1-5-7z" fill="#8757e8" /><path d="M3 5a11.500 11.500 0 0 0 6 18l1-4-4-7z" fill="#f58a1c" /><circle cx="12" cy="12" r="7" fill="#fff" /><circle cx="12" cy="10.500" r="2" fill="#26315c" /><path d="M11 11h2v4.500h-2z" fill="#26315c" /></svg></div>
      <div class="app"><svg viewBox="0 0 24 24" width="24" height="24"><path d="M12 1.500L22.500 9 19 22H5.500L1.500 9zM12 1.500L7 9l2.500 8.500 9.500 4.500M1.500 9L7 9l14-1M9.500 17.500L5.500 22M9.500 17.500L22 9" fill="none" stroke="#12b3c7" stroke-width="2" /></svg></div>
      <div class="app"><svg viewBox="0 0 24 20" width="24" height="20"><path d="M1 7v10h4v-5M13 7v10h4v-5" fill="#2b84cf" /><circle cx="6" cy="7" r="5.500" fill="#3d97dc" /><circle cx="18" cy="7" r="5.500" fill="#3d97dc" /><circle cx="6" cy="6.500" r="4" fill="#fff" /><circle cx="18" cy="6.500" r="4" fill="#fff" /><circle cx="6" cy="6" r="1.900" fill="#222" /><circle cx="18" cy="6" r="1.900" fill="#222" /></svg></div>
      <div class="tray">
        <svg viewBox="0 0 16 16" class="i16"><path d="M2.500 11L8 5.500l5.500 5.500" fill="none" stroke="#fff" stroke-width="1.200" /></svg>
        <svg viewBox="0 0 16 16" class="i16"><path d="M4 13a3.500 3.500 0 0 1 0-7 4.500 4.500 0 0 1 8 1 3 3 0 0 1 1 6z" fill="#e7e7e7" /><path d="M0 10c0-3 3-4.500 5-3.500l9 4c0 2-1 2.500-2 2.500H4c-2 0-4-1-4-3z" fill="#bdbdbd" /></svg>
        <svg viewBox="0 0 16 16" class="i16"><rect x=".5" y=".5" width="15" height="15" rx="5" fill="#d5f1f0" /><circle cx="8" cy="8" r="6.600" fill="#0b9a9a" /><path d="M5 8h6a3 3 0 1 0-1 2.500" fill="none" stroke="#fff" stroke-width="1.800" /></svg>
        <svg viewBox="0 0 16 16" class="i16"><path d="M8 0l6 2v5c0 4-3 6-6 7-3-1-6-3-6-7V2z" fill="#fff" /><path d="M8 1v12M2 7h12" stroke="#1f2c3d" /><circle cx="11.500" cy="11.500" r="4.500" fill="#159943" /><path d="M9.500 11.500l1.500 1.500 2.500-3" fill="none" stroke="#fff" stroke-width="1.200" /></svg>
        <svg viewBox="0 0 16 16" class="i16"><rect width="16" height="16" rx="1.500" fill="#1984d2" /><path d="M3 4l7-1v4l-6 1zM7 8l6-1v4l-5 1zM3 11l5 3M2 13c3 2 9 2 12-1" fill="none" stroke="#a7dcff" stroke-width="1.200" /></svg>
        <svg viewBox="0 0 16 16" class="i16"><path d="M4.500 4.500h11v7h-9M9.500 12v2M6 14.500h7M.500 1.500h4v4h-4zM2.500 6v8.500h3" fill="none" stroke="#fff" /></svg>
        <svg viewBox="0 0 16 16" class="i16"><path d="M.5 6H3l3-3v10l-3-3H.5zM8 6c1 1 1 3 0 4M10 4.500c2 2 2 5 0 7M12.500 3c3 3 3 7 0 10" fill="none" stroke="#fff" /></svg>
      </div>
      <div class="clock"><span>19:44</span><span>18/05/2022</span></div>
      <div class="notif">
        <svg viewBox="0 0 26 26" width="26" height="26"><path d="M2 3h16v12H9l-3 3v-3H2z" fill="#fff" /><path d="M5 6h10M5 9h10M5 12h7" stroke="#1b2740" stroke-width="1.200" /></svg>
        <b>2</b>
      </div>
      <div class="peek" />
    </footer>
  </div>
</template>

<style>
body { overflow: hidden; }
</style>

<style scoped>
.screen { width: 1366px; height: 768px; overflow: hidden; display: flex; flex-direction: column; font-family: "Open Sans", "Noto Sans", sans-serif; background: #f0f0f0; font-size: 12.3px; color: #3c434a; }
.screen *, .screen { box-sizing: border-box; }
ul, p, h2, h4 { margin: 0; padding: 0; list-style: none; }
button { font-family: inherit; border: 0; padding: 0; margin: 0; }
svg { display: block; flex: none; fill: currentColor; }
b { font-weight: 600; }
.i12 { width: 12px; height: 12px; }
.i16 { width: 16px; height: 16px; }
.i18 { width: 18px; height: 18px; }
.i19 { width: 19px; height: 19px; }
.i20 { width: 20px; height: 20px; }
.i22 { width: 22px; height: 22px; }

.tabstrip { height: 32px; flex: none; display: flex; align-items: center; background: #cdcdcd; color: #111; font-size: 11.3px; }
.tab-menu { width: 48px; height: 20px; padding: 2px 0 0 16px; border-right: 1px solid #8f8f8f; }
.tab { width: 221px; height: 32px; display: flex; align-items: center; padding: 0 8px 0 11px; }
.tab .fav { margin-right: 10px; color: #777; }
.tab.active { background: #f7f7f7; border-radius: 6px 6px 0 0; }
.tab-title { width: 157px; height: 20px; line-height: 20px; white-space: nowrap; letter-spacing: 0; mask-image: linear-gradient(90deg, #000 88%, rgba(0, 0, 0, 0.25)); }
.tab .x { margin-left: auto; }
.tab.divider { background: linear-gradient(#777, #777) right center / 1px 20px no-repeat; }
.newtab { margin-left: 9px; }
.wincontrols { margin-left: auto; display: flex; gap: 34px; padding-right: 17px; }

.toolbar { height: 39px; flex: none; display: flex; align-items: center; background: #f7f7f7; border-bottom: 1px solid #d2d2d2; }
.navbtns { width: 143px; display: flex; gap: 26px; padding-left: 19px; }
.address { width: 1032px; height: 32px; display: flex; align-items: center; border: 2px solid #8eb2f2; border-radius: 5px; background: #fff; padding: 0 13px 0 17px; }
.lock { width: 16px; height: 18px; margin-right: 15px; }
.url { flex: 1; font-size: 13.5px; letter-spacing: 0.08px; color: #707070; white-space: nowrap; }
.url mark { display: inline-block; height: 22px; line-height: 22px; background: #0078d7; color: #fff; letter-spacing: -0.07px; }
.a1, .a2, .a3 { margin-right: 18px; }
.toolicons { display: flex; align-items: center; gap: 25px; padding-left: 17px; }

.viewport { flex: 1; min-height: 0; display: flex; }
.page { width: 1349px; display: flex; flex-direction: column; overflow: hidden; }
.adminbar { height: 32px; flex: none; background: #1d2327; color: #f0f0f1; display: grid; grid-template-columns: 37px 126px 48px 50px 76px 118px 56px 62px 86px 95px 77px 1fr auto; padding-left: 7px; white-space: nowrap; font-size: 12.3px; }
.adminbar > div { display: flex; align-items: center; }
.adminbar svg { color: #a7aaad; }
.adminbar .pull { margin-left: -2px; }
.adminbar .nudge { margin-left: -1px; }
.t1 { margin-left: 6px; }
.t2 { margin-left: 7px; }
.t3 { margin-left: 4px; }
.t4 { margin-left: 6px; }
.dim { color: #8c8f94; }
.dot { width: 12px; height: 12px; border-radius: 50%; background: #888; margin-left: 11px; }
.badge { width: 18px; height: 18px; border-radius: 50%; background: #d63638; color: #fff; font-size: 10.5px; line-height: 18px; text-align: center; font-weight: 400; }
.bar-badge { margin-left: 6px; }
.adminbar .tiger { width: 23px; height: 18px; color: #e6e6e6; }
.bar-right { padding-right: 8px; }
.notes { width: 20px; height: 20px; margin-right: 15px; padding: 3px; background: radial-gradient(#666, #353a3e); border-radius: 2px; }
.notes svg { width: 14px; height: 14px; color: #c8c8c8; }
.avatar { width: 18px; height: 18px; margin-left: 6px; border: 1px solid #8c8f94; }

.content { flex: 1; min-height: 0; display: flex; background: #f0f0f0; overflow: hidden; }
.sidemenu { width: 160px; background: #1d2327; color: #f0f0f1; font-size: 13.2px; }
.side-item { height: 34.2px; display: flex; align-items: center; padding-left: 9px; }
.side-item:first-child { margin-top: -15.6px; }
.side-item svg { color: #a0a5aa; margin-right: 9px; }
.side-item.gap { margin-top: 10.9px; }
.side-item .badge { margin-left: 7px; }

.main { width: 847px; margin-left: 22px; }
.editor { height: 173px; border: 1px solid #dcdcde; border-top: 0; background: #f5f5f5; }
.elementor-btn { display: flex; align-items: center; justify-content: center; width: 245px; height: 45px; margin: 0 auto; padding-bottom: 3px; background: #2271b1; color: #fff; border-radius: 0 0 3px 3px; font: 14px "Liberation Sans", sans-serif; gap: 6px; --hole: #2271b1; }
.box { background: #fff; border: 1px solid #c3c4c7; }
.ocean { margin-top: 68px; height: 420px; }
.box-head { height: 37px; display: flex; align-items: center; border-bottom: 1px solid #c3c4c7; padding: 0 8px 0 12px; font-size: 13.2px; font-weight: 600; color: #1d2327; }
.box-head span { flex: 1; letter-spacing: 0.05px; }
.box-head svg { color: #787c82; margin-right: 6px; }
.box-head .tri { margin: 0 0 0 5px; }
.ocean-body { display: flex; }
.ocean-tabs { width: 180px; color: #555; font-size: 12.4px; }
.ocean-tabs li { height: 41px; display: flex; align-items: center; padding-left: 10px; gap: 8px; background: #fafafa; border: solid #eee; border-width: 0 1px 1px 0; }
.ocean-tabs .current { background: #fff; font-weight: 700; border-right-color: #fff; }
.fields { flex: 1; padding: 5px 30px 0; }
.field { height: 74px; display: flex; justify-content: space-between; padding-top: 15px; border-bottom: 1px solid #eee; }
.field.last { border: 0; height: 120px; }
.desc { white-space: nowrap; color: #222; }
.desc h4 { font-size: 12.4px; line-height: 18px; padding-top: 1px; font-weight: 700; letter-spacing: -0.08px; }
.desc p { font-size: 11.4px; line-height: 16.600px; margin-top: 8px; }
.select { width: 302px; height: 34px; flex: none; background: #f5f5f5; border: 1px solid #e6e6e6; display: flex; align-items: center; justify-content: space-between; padding: 0 10px 0 12px; color: #555; }
.select svg { width: 12px; height: 12px; color: #666; margin-bottom: 3px; stroke-width: 3.500; }
.toggle { width: 302px; height: 39px; display: flex; font-size: 12.5px; letter-spacing: 0.3px; color: #555; }
.toggle span { width: 83px; border: 1px solid #e6e6e6; border-left: 0; background: #f5f5f5; text-align: center; line-height: 39px; }
.toggle .on { width: 79px; background: #06204c; color: #fff; border: 1px solid #e6e6e6; border-right: 0; }

.rightcol { width: 280px; margin-left: 20px; }
a { color: #2271b1; text-decoration: underline; }
.publish { border-top: 0; height: 400px; display: flex; flex-direction: column; }
.pub-body { height: 346px; padding: 0 10px; }
.pub-body p { height: 20px; display: flex; align-items: center; white-space: nowrap; }
.pub-body svg { color: #8c8f94; margin-right: 7px; }
.pub-body .green { color: #7ad03a; }
.pub-body .r1 { margin-top: -4px; }
.pub-body .r2 { margin-top: 14px; }
.r3 { margin-top: 0; }
.r4 { margin-top: 12px; }
.r5 { margin-top: 12px; }
.r6 { margin-top: 14px; }
.r7 { margin-top: 4px; padding-left: 6px; }
.r8 { margin-top: -1px; padding-left: 6px; }
.r9 { padding-left: 6px; }
.r10 { margin-top: 3px; justify-content: space-between; }
.check { width: 16px; height: 16px; border: 1px solid #e2e2e2; border-radius: 3px; margin: -2px 8px 0 0; }
.message { margin-top: 4px; height: 46px; border: 1px solid #dcdcde; border-radius: 4px; padding: 3px 6px; font-size: 13px; line-height: 19px; color: #a0a0a0; display: flex; justify-content: space-between; letter-spacing: 0.25px; }
.pub-body .message svg { width: 10px; height: 10px; align-self: flex-end; margin: 0 -5px -3px 0; }
.ok { display: block; width: 39px; height: 30px; margin-top: 4px; border: 1px solid #2271b1; border-radius: 3px; background: #f6f7f7; color: #2271b1; font-size: 12.3px; }
.pub-foot { flex: 1; border-top: 1px solid #dcdcde; background: #f6f7f7; display: flex; align-items: center; justify-content: space-between; padding: 0 10px; }
.pub-foot a { color: #b32d2e; padding-bottom: 2px; }
.pub-foot button { width: 79px; height: 32px; border-radius: 3px; background: #2271b1; color: #fff; font-size: 12.6px; }
.format { margin-top: 20px; height: 240px; }
.format ul { padding-top: 7.500px; }
.format li { height: 27.800px; display: flex; align-items: center; padding-left: 12px; white-space: nowrap; }
.format li svg { margin: 0 7.500px 0 8px; color: #dcdcde; }
.format li.picked svg { color: #8c8f94; }
.radio { width: 16px; height: 16px; border: 1px solid #8c8f94; border-radius: 50%; flex: none; }
.picked .radio { background: radial-gradient(circle, #3582c4 3.600px, #fff 4.400px); }

.scrollbar { width: 17px; background: #f1f1f1; display: flex; flex-direction: column; align-items: center; padding: 7px 0; }
.scrollbar svg { width: 9px; height: 6px; }
.thumb { width: 13px; height: 72px; margin-top: 79px; background: #c1c1c1; }
.scrollbar .bottom { margin-top: auto; }

.taskbar { height: 40px; flex: none; display: flex; background: linear-gradient(90deg, #213a42, #22343f 45%, #1c2a3e 75%, #1a2640); color: #fff; }
.start { width: 48px; display: flex; align-items: center; justify-content: center; }
.searchbox { width: 344px; display: flex; align-items: center; gap: 10px; padding-left: 11px; background: #f2f2f2; border: 1px solid #bababa; color: #3a3a3a; font-size: 14.2px; letter-spacing: 0.03px; }
.app { width: 48px; margin-right: 1px; display: flex; align-items: center; justify-content: center; }
.taskview { margin-right: 3px; }
.edge { background: #4d5f68; box-shadow: inset 0 -2px #76b9ed; }
.running { background: linear-gradient(#76b9ed, #76b9ed) center bottom / 40px 2px no-repeat; }
.tray { margin-left: auto; display: flex; align-items: center; gap: 8px; }
.clock { width: 78px; display: flex; flex-direction: column; justify-content: center; align-items: center; font-size: 11.4px; line-height: 18px; letter-spacing: -0.2px; }
.notif { width: 44px; position: relative; display: flex; align-items: center; padding: 2px 0 0 6px; }
.notif b { position: absolute; left: 15px; top: 18px; width: 17px; height: 17px; border-radius: 50%; background: #3c4047; border: 1px solid #888; text-align: center; line-height: 15px; font-size: 11px; }
.peek { width: 5px; border-left: 1px solid #56616f; }
</style>
